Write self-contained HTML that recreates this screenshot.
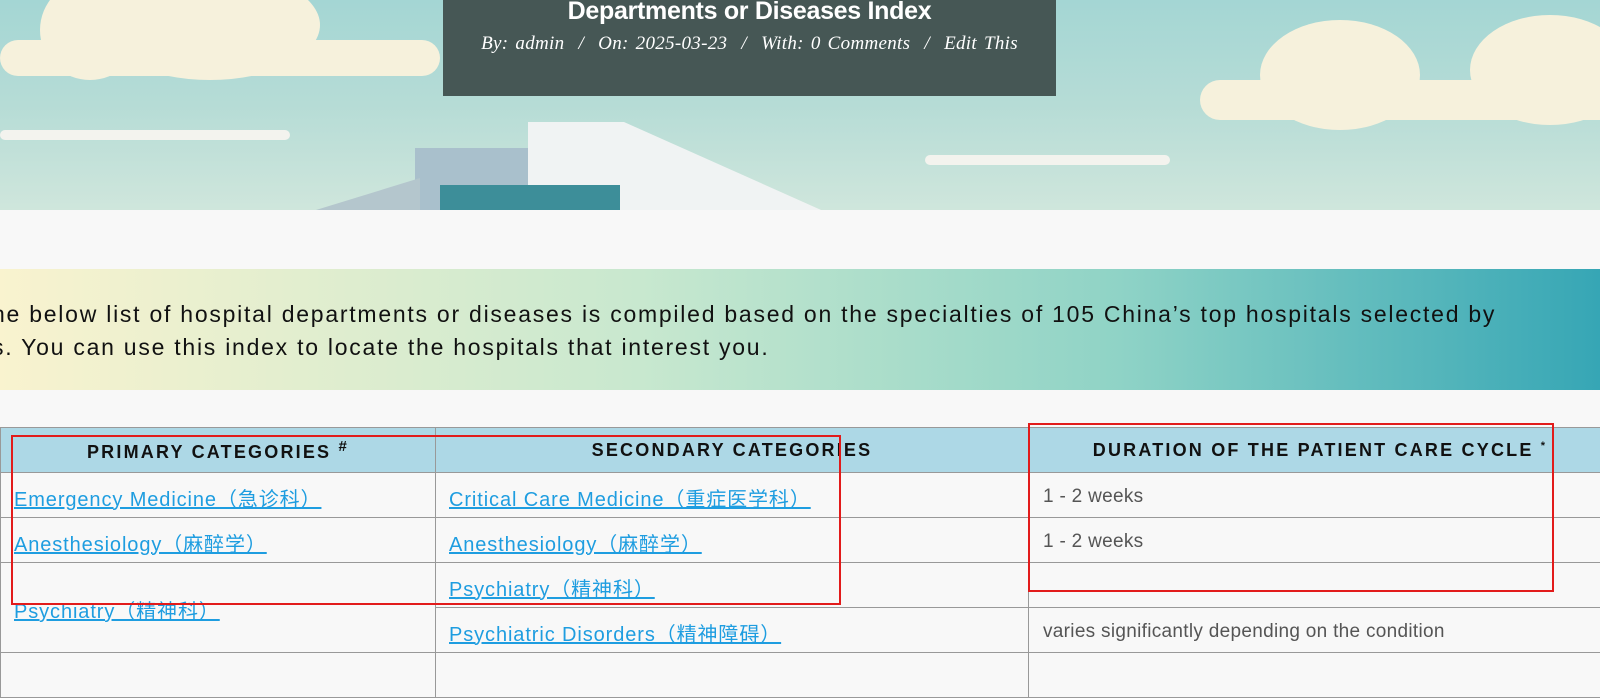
<!DOCTYPE html>
<html><head><meta charset="utf-8"><style>
*{margin:0;padding:0;box-sizing:border-box}
body{width:1600px;height:672px;overflow:hidden;background:#f8f8f8;font-family:"Liberation Sans","Noto Sans CJK SC",sans-serif;position:relative}
.hero{position:absolute;left:0;top:0;width:1600px;height:210px;background:linear-gradient(180deg,#a4d6d4 0%,#b6dcd6 50%,#cfe6dc 100%);overflow:hidden}
.cloud{position:absolute;background:#f6f1dc;border-radius:50%}
.bar{position:absolute;background:#f3f3ee;border-radius:6px;height:10px}
.title{position:absolute;left:443px;top:0;width:613px;height:96px;background:#465755;text-align:center;color:#fff}
.title h1{font-size:25px;font-weight:bold;margin-top:-3px;letter-spacing:-0.3px}
.title p{font-family:"Liberation Serif",serif;font-style:italic;font-size:19px;margin-top:7px;word-spacing:2px;letter-spacing:0.3px}
.banner{position:absolute;left:0;top:269px;width:1600px;height:121px;background:linear-gradient(90deg,#f9f3cf 0%,#c8e8cf 40%,#8fd3c6 70%,#36a6b5 100%);font-size:23px;color:#111;padding:29px 0 0 0;line-height:33px;letter-spacing:1.75px;white-space:nowrap}
table{position:absolute;left:0;top:427px;border-collapse:collapse;width:1612px}
td,th{border:1px solid #999;height:45px;font-size:20px;vertical-align:middle;padding-top:4px}
th{background:#add8e6;font-size:18px;letter-spacing:2.2px;font-weight:bold;color:#111;text-align:center;padding-top:0}
td a{color:#1e9de0;text-decoration:underline;letter-spacing:0.9px}
td.g{color:#555;padding-left:14px;letter-spacing:0.3px;font-size:19px}
td.p{padding-left:13px}
.red{position:absolute;border:2px solid #e21b1b}
</style></head><body>
<div class="hero">
<div class="cloud" style="left:40px;top:-20px;width:100px;height:100px"></div>
<div class="cloud" style="left:100px;top:-30px;width:220px;height:110px"></div>
<div class="cloud" style="left:0;top:40px;width:440px;height:36px;border-radius:18px"></div>
<div class="cloud" style="left:1260px;top:20px;width:160px;height:110px"></div>
<div class="cloud" style="left:1470px;top:15px;width:160px;height:110px"></div>
<div class="cloud" style="left:1200px;top:80px;width:420px;height:40px;border-radius:20px"></div>
<div class="bar" style="left:0;top:130px;width:290px"></div>
<div class="bar" style="left:925px;top:155px;width:245px"></div>
<div style="position:absolute;left:415px;top:148px;width:115px;height:70px;background:#a9c0cc"></div>
<div style="position:absolute;left:528px;top:122px;width:320px;height:100px;background:#f0f3f3;clip-path:polygon(0 0,30% 0,100% 100%,0 100%)"></div>
<div style="position:absolute;left:440px;top:185px;width:180px;height:30px;background:#3d8e99"></div>
<div style="position:absolute;left:290px;top:178px;width:130px;height:40px;background:#b4c6cd;clip-path:polygon(100% 0,100% 100%,0 100%)"></div>
</div>
<div class="title"><h1>Departments or Diseases Index</h1><p>By: admin &nbsp;/&nbsp; On: 2025-03-23 &nbsp;/&nbsp; With: 0 Comments &nbsp;/&nbsp; Edit This</p></div>
<div class="banner"><div style="margin-left:-8px">he below list of hospital departments or diseases is compiled based on the specialties of 105 China’s top hospitals selected by<br>s. You can use this index to locate the hospitals that interest you.</div></div>
<table>
<tr><th style="width:435px">PRIMARY CATEGORIES <sup>#</sup></th><th style="width:593px">SECONDARY CATEGORIES</th><th>DURATION OF THE PATIENT CARE CYCLE <sup style="font-size:11px">*</sup></th></tr>
<tr><td class="p"><a>Emergency Medicine（急诊科）</a></td><td class="p"><a>Critical Care Medicine（重症医学科）</a></td><td class="g">1 - 2 weeks</td></tr>
<tr><td class="p"><a>Anesthesiology（麻醉学）</a></td><td class="p"><a>Anesthesiology（麻醉学）</a></td><td class="g">1 - 2 weeks</td></tr>
<tr><td class="p" rowspan="2" style="vertical-align:top;padding-top:32px"><a>Psychiatry（精神科）</a></td><td class="p"><a>Psychiatry（精神科）</a></td><td class="g"></td></tr>
<tr><td class="p"><a>Psychiatric Disorders（精神障碍）</a></td><td class="g">varies significantly depending on the condition</td></tr>
<tr><td></td><td></td><td></td></tr>
</table>
<div class="red" style="left:11px;top:435px;width:830px;height:170px"></div>
<div class="red" style="left:1028px;top:423px;width:526px;height:169px"></div>
</body></html>
